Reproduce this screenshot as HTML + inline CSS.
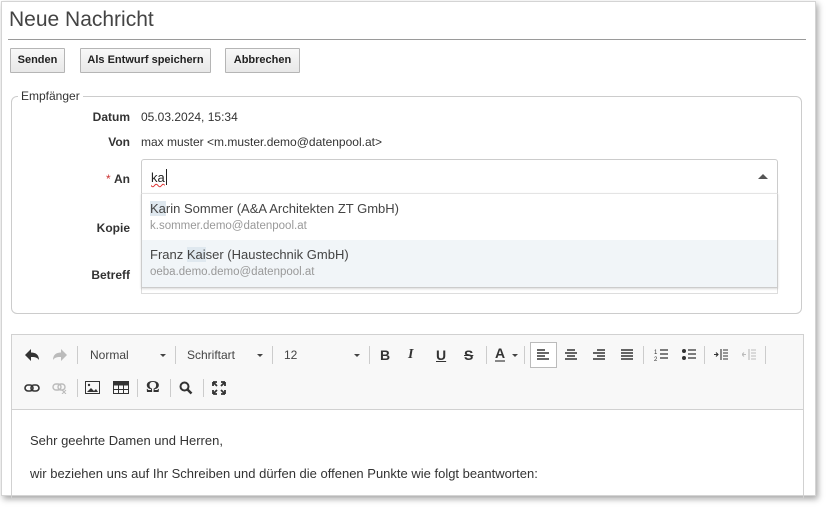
<!DOCTYPE html>
<html><head><meta charset="utf-8"><style>
*{box-sizing:border-box}
body{margin:0;width:828px;height:509px;background:#fff;font-family:"Liberation Sans",Arial,sans-serif;color:#333;position:relative;overflow:hidden}
.win{position:absolute;left:1px;top:1px;width:815px;height:495px;border:1px solid #d4d4d4;box-shadow:2px 3px 6px rgba(0,0,0,.35);background:#fff}
.in{position:absolute;left:-2px;top:-2px;width:815px;height:495px}
.abs{position:absolute}
h1{position:absolute;left:9px;top:8px;margin:0;font-size:21px;font-weight:normal;color:#444}
.hr{position:absolute;left:8px;top:39px;width:798px;height:1px;background:#9a9a9a}
.btn{position:absolute;top:48px;height:25px;border:1px solid #b5b5b5;background:linear-gradient(#f8f8f8,#e8e8e8);font-size:11px;font-weight:bold;color:#222;text-align:center;line-height:23px;border-radius:1px}
.fs{position:absolute;left:11px;top:96px;width:791px;height:218px;border:1px solid #ccc;border-radius:6px}
.lg{position:absolute;left:18px;top:89px;background:#fff;padding:0 3px;font-size:12px;color:#333}
.lbl{position:absolute;width:120px;left:10px;text-align:right;font-size:12px;font-weight:bold;color:#333}
.val{position:absolute;left:141px;font-size:12px;color:#333}
.inp{position:absolute;left:141px;width:637px;border:1px solid #ccc;background:#fff}
.tb{position:absolute;left:11px;top:334px;width:793px;height:165px;border:1px solid #d1d1d1}
.tbar{position:absolute;left:0;top:0;width:100%;height:75px;background:#f8f8f8;border-bottom:1px solid #d1d1d1}
.i{position:absolute;font-size:14px;color:#333;font-weight:bold;line-height:16px}
.sep{position:absolute;width:1px;height:18px;background:#ccc}
.dd{position:absolute;font-size:12px;color:#444}
.car{position:absolute;width:0;height:0;border-left:3px solid transparent;border-right:3px solid transparent;border-top:3px solid #444}
</style></head><body>
<div class="win"><div class="in">
<h1>Neue Nachricht</h1>
<div class="hr"></div>
<div class="btn" style="left:10px;width:55px">Senden</div>
<div class="btn" style="left:80px;width:131px">Als Entwurf speichern</div>
<div class="btn" style="left:225px;width:75px">Abbrechen</div>
<div class="fs"></div>
<div class="lg">Empfänger</div>
<div class="lbl" style="top:110px">Datum</div><div class="val" style="top:110px">05.03.2024, 15:34</div>
<div class="lbl" style="top:135px">Von</div><div class="val" style="top:135px">max muster &lt;m.muster.demo@datenpool.at&gt;</div>
<div class="lbl" style="top:172px"><span style="color:#c33;font-weight:normal">* </span>An</div>
<div class="lbl" style="top:221px">Kopie</div>
<div class="lbl" style="top:268px">Betreff</div>
<div class="inp" style="top:270px;height:24px;border-color:#ddd"></div>
<div class="inp" style="top:159px;height:35px;border-radius:3px 3px 0 0"><span class="abs" style="left:9px;top:10px;font-size:13px;color:#222;text-decoration:underline wavy #d33;text-decoration-thickness:1px">ka</span><span class="abs" style="left:24px;top:9px;width:1px;height:16px;background:#222"></span>
<span class="abs" style="left:616px;top:14px;width:0;height:0;border-left:5px solid transparent;border-right:5px solid transparent;border-bottom:5px solid #555"></span></div>
<div class="inp" style="top:193px;height:95px;border-top-color:#e4e4e4;box-shadow:0 1px 2px rgba(0,0,0,.15)">
<div class="abs" style="left:8px;top:7px;font-size:13px;color:#444"><span style="background:#dfe8ef">Ka</span>rin Sommer (A&amp;A Architekten ZT GmbH)</div>
<div class="abs" style="left:8px;top:26px;font-size:11.5px;color:#999">k.sommer.demo@datenpool.at</div>
<div class="abs" style="left:0;top:46px;width:100%;height:47px;background:#f1f5f8"></div>
<div class="abs" style="left:8px;top:53px;font-size:13px;color:#444">Franz <span style="background:#dfe8ef">Kai</span>ser (Haustechnik GmbH)</div>
<div class="abs" style="left:8px;top:72px;font-size:11.5px;color:#999">oeba.demo.demo@datenpool.at</div>
</div>
<div class="tb"><div class="tbar"></div>
<div class="abs" style="left:18px;top:98px;font-size:13px;color:#333">Sehr geehrte Damen und Herren,</div>
<div class="abs" style="left:18px;top:131px;font-size:13px;color:#333">wir beziehen uns auf Ihr Schreiben und dürfen die offenen Punkte wie folgt beantworten:</div>
</div>
</div></div>
<svg class="abs" style="left:24px;top:348px" width="16" height="14" viewBox="0 0 16 14"><path d="M1 7 L7 1 V4.5 C12 4.5 15 7 15 12 C13 9 10 9 7 9 V13 Z" fill="#333"/></svg>
<svg class="abs" style="left:52px;top:348px" width="16" height="14" viewBox="0 0 16 14"><path d="M15 7 L9 1 V4.5 C4 4.5 1 7 1 12 C3 9 6 9 9 9 V13 Z" fill="#bbb"/></svg>
<div class="sep" style="left:77px;top:346px"></div>
<div class="dd" style="left:90px;top:348px">Normal</div><div class="car" style="left:160px;top:354px"></div>
<div class="sep" style="left:175px;top:346px"></div>
<div class="dd" style="left:187px;top:348px">Schriftart</div><div class="car" style="left:257px;top:354px"></div>
<div class="sep" style="left:272px;top:346px"></div>
<div class="dd" style="left:284px;top:348px">12</div><div class="car" style="left:354px;top:354px"></div>
<div class="sep" style="left:369px;top:346px"></div>
<div class="i" style="left:380px;top:347px">B</div>
<div class="i" style="left:408px;top:347px;font-family:'Liberation Serif',serif;font-style:italic">I</div>
<div class="i" style="left:436px;top:347px;text-decoration:underline">U</div>
<div class="i" style="left:464px;top:347px;text-decoration:line-through">S</div>
<div class="sep" style="left:486px;top:346px"></div>
<div class="i" style="left:495px;top:346px;border-bottom:2px solid #888;line-height:14px">A</div><div class="car" style="left:512px;top:354px"></div>
<div class="sep" style="left:524px;top:346px"></div>
<div class="abs" style="left:530px;top:342px;width:27px;height:26px;border:1px solid #bbb;background:#fff"></div>
<svg class="abs" style="left:536px;top:349px" width="14" height="12"><path d="M1 1h8M1 4h12M1 7h8M1 10h12" stroke="#333" stroke-width="1.6"/></svg>
<svg class="abs" style="left:564px;top:349px" width="14" height="12"><path d="M3 1h8M1 4h12M3 7h8M1 10h12" stroke="#333" stroke-width="1.6"/></svg>
<svg class="abs" style="left:592px;top:349px" width="14" height="12"><path d="M5 1h8M1 4h12M5 7h8M1 10h12" stroke="#333" stroke-width="1.6"/></svg>
<svg class="abs" style="left:620px;top:349px" width="14" height="12"><path d="M1 1h12M1 4h12M1 7h12M1 10h12" stroke="#333" stroke-width="1.6"/></svg>
<div class="sep" style="left:643px;top:346px"></div>
<svg class="abs" style="left:654px;top:348px" width="14" height="13"><path d="M6 2h8M6 6h8M6 10h8" stroke="#333" stroke-width="1.2"/><text x="0" y="6" font-size="6" fill="#333">1</text><text x="0" y="13" font-size="6" fill="#333">2</text></svg>
<svg class="abs" style="left:682px;top:348px" width="14" height="13"><circle cx="2" cy="3" r="2" fill="#333"/><circle cx="2" cy="10" r="2" fill="#333"/><path d="M6 2h8M6 6h8M6 10h8" stroke="#333" stroke-width="1.2"/></svg>
<div class="sep" style="left:704px;top:346px"></div>
<svg class="abs" style="left:714px;top:348px" width="14" height="13"><path d="M7 1v11M9 2h5M9 5h5M9 8h5M9 11h5M0 6.5h4M2 4.5l2 2-2 2" stroke="#333" stroke-width="1.1" fill="none"/></svg>
<svg class="abs" style="left:742px;top:348px" width="14" height="13"><path d="M7 1v11M9 2h5M9 5h5M9 8h5M9 11h5M0 6.5h4M2 4.5l-2 2 2 2" stroke="#bbb" stroke-width="1.1" fill="none"/></svg>
<div class="sep" style="left:765px;top:346px"></div>
<svg class="abs" style="left:24px;top:382px" width="16" height="12"><rect x="1" y="3" width="8" height="6" rx="3" stroke="#333" stroke-width="1.6" fill="none"/><rect x="7" y="3" width="8" height="6" rx="3" stroke="#333" stroke-width="1.6" fill="none"/></svg>
<svg class="abs" style="left:52px;top:382px" width="16" height="12"><rect x="1" y="2" width="8" height="6" rx="3" stroke="#bbb" stroke-width="1.4" fill="none"/><rect x="6" y="2" width="7" height="6" rx="3" stroke="#bbb" stroke-width="1.4" fill="none"/><path d="M10 8l4 4M14 8l-4 4" stroke="#bbb"/></svg>
<div class="sep" style="left:77px;top:379px"></div>
<svg class="abs" style="left:85px;top:381px" width="15" height="13"><rect x="0.5" y="0.5" width="14" height="12" fill="none" stroke="#333"/><path d="M2 11l4-4 3 3 2-2 2 3z" fill="#333"/><circle cx="4" cy="4" r="1.2" fill="#333"/></svg>
<svg class="abs" style="left:113px;top:381px" width="16" height="13"><rect x="0.5" y="0.5" width="15" height="12" fill="none" stroke="#333"/><path d="M0 4h16M0 8.5h16M5.5 4v9M10.5 4v9" stroke="#333"/><rect x="0" y="0" width="16" height="4" fill="#333"/></svg>
<div class="sep" style="left:137px;top:379px"></div>
<div class="i" style="left:146px;top:379px;font-family:'Liberation Serif',serif;font-size:17px">Ω</div>
<div class="sep" style="left:170px;top:379px"></div>
<svg class="abs" style="left:179px;top:381px" width="14" height="14"><circle cx="5.5" cy="5.5" r="4" stroke="#333" stroke-width="2" fill="none"/><path d="M8.5 8.5l4 4" stroke="#333" stroke-width="2.5"/></svg>
<div class="sep" style="left:203px;top:379px"></div>
<svg class="abs" style="left:212px;top:381px" width="14" height="14"><path d="M1 1l4 4M1 1h4M1 1v4M13 1l-4 4M13 1h-4M13 1v4M1 13l4-4M1 13h4M1 13v-4M13 13l-4-4M13 13h-4M13 13v-4" stroke="#333" stroke-width="1.8"/></svg>
</body></html>
